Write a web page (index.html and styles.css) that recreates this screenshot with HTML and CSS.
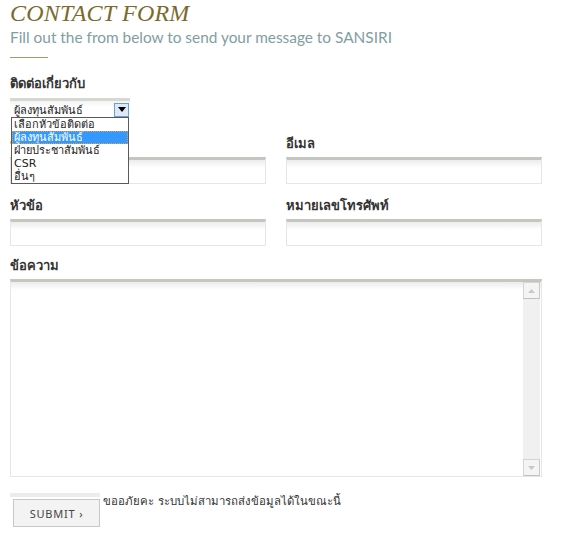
FILE: index.html
```html
<!DOCTYPE html>
<html lang="th">
<head>
<meta charset="utf-8">
<title>Contact Form</title>
<link rel="stylesheet" href="styles.css">
</head>
<body>
<div class="page">
  <h1 class="title">CONTACT FORM</h1>
  <p class="subtitle">Fill out the from below to send your message to SANSIRI</p>
  <div class="rule"></div>

  <div class="topic">
    <label class="label">ติดต่อเกี่ยวกับ</label>
    <div class="select">
      <span class="select-text">ผู้ลงทุนสัมพันธ์</span>
      <span class="select-btn"><svg width="8" height="5" viewBox="0 0 8 5"><path d="M0 0h8L4 5z" fill="#000"/></svg></span>
    </div>
    <ul class="dropdown">
      <li>เลือกหัวข้อติดต่อ</li>
      <li class="active">ผู้ลงทุนสัมพันธ์</li>
      <li>ฝ่ายประชาสัมพันธ์</li>
      <li>CSR</li>
      <li>อื่นๆ</li>
    </ul>
  </div>

  <div class="grid">
    <div class="field">
      <label class="label">ชื่อ</label>
      <input class="input" type="text">
    </div>
    <div class="field">
      <label class="label">อีเมล</label>
      <input class="input" type="text">
    </div>
    <div class="field">
      <label class="label">หัวข้อ</label>
      <input class="input" type="text">
    </div>
    <div class="field">
      <label class="label">หมายเลขโทรศัพท์</label>
      <input class="input" type="text">
    </div>
  </div>

  <div class="field">
    <label class="label">ข้อความ</label>
    <div class="textarea-box">
      <textarea class="textarea"></textarea>
      <div class="scrollbar">
        <span class="sb-btn"><svg width="7" height="4" viewBox="0 0 7 4"><path d="M0 4h7L3.5 0z" fill="#c8c8c8"/></svg></span>
        <span class="sb-track"></span>
        <span class="sb-btn"><svg width="7" height="4" viewBox="0 0 7 4"><path d="M0 0h7L3.5 4z" fill="#c8c8c8"/></svg></span>
      </div>
    </div>
  </div>

  <div class="submit-row">
    <div class="submit-wrap">
      <div class="strip"></div>
      <button class="submit" type="button">SUBMIT &#8250;</button>
    </div>
    <span class="message">ขออภัยคะ ระบบไม่สามารถส่งข้อมูลได้ในขณะนี้</span>
  </div>
</div>
</body>
</html>
```

FILE: styles.css
```css
* { box-sizing: border-box; }
html, body { margin: 0; padding: 0; background: #fff; }
body { font-family: Tahoma, "DejaVu Sans", "Noto Sans", sans-serif; color: #333; }

.page { padding: 0 21px 0 10px; width: 563px; }

.title {
  margin: 0;
  padding-top: 0;
  font-family: "Liberation Serif", serif;
  font-style: italic;
  font-weight: normal;
  font-size: 24px;
  line-height: 26px;
  color: #7a6a2c;
  letter-spacing: 0.2px;
}

.subtitle {
  margin: 0;
  font-family: Lato, "Open Sans", sans-serif;
  font-weight: 400;
  font-size: 15.4px;
  line-height: 22px;
  color: #7f9ea1;
}

.rule { width: 38px; height: 1px; background: #a59a70; margin-top: 9px; }

.label {
  display: block;
  font-weight: bold;
  font-size: 13px;
  line-height: 16px;
  color: #333;
}

.topic { position: relative; margin-top: 18px; }
.topic .label { margin-bottom: 6px; }

.select {
  width: 120px;
  height: 20px;
  border-top: 3px solid #d6d8d2;
  background: linear-gradient(#f3f3f3, #fff 6px);
  display: flex;
  align-items: center;
  justify-content: space-between;
  padding: 0 1px 0 4px;
}
.select-text { font-size: 11px; color: #222; }
.select-btn {
  width: 15px; height: 14px;
  border: 1px solid #6a9fd4;
  background: #dce9f6;
  display: flex; align-items: center; justify-content: center;
}

.dropdown {
  position: absolute;
  left: 1px; top: 41px;
  width: 118px;
  margin: 0; padding: 0;
  list-style: none;
  border: 1px solid #5a5a5a;
  background: #fff;
  z-index: 5;
}
.dropdown li {
  font-size: 11px;
  line-height: 13px;
  height: 13px;
  padding: 0 2px;
  color: #222;
  white-space: nowrap;
  overflow: visible;
}
.dropdown li.active {
  background: #3399ff;
  color: #fff;
  outline: 1px dotted #e8a040;
  outline-offset: -1px;
}

.grid {
  display: grid;
  grid-template-columns: 256px 256px;
  column-gap: 20px;
  row-gap: 14px;
  margin-top: 18px;
}

.field .label { margin-bottom: 5px; }

.input {
  display: block;
  width: 100%;
  height: 27px;
  border: 1px solid #e6e6e6;
  border-top: 3px solid #c3c7c0;
  background: linear-gradient(#ececec, #fff 8px);
  outline: none;
  margin: 0;
}

.grid + .field { margin-top: 12px; }

.textarea-box {
  display: flex;
  width: 532px;
  height: 198px;
  border: 1px solid #e6e6e6;
  border-top: 3px solid #c3c7c0;
  background: linear-gradient(#ececec, #fff 8px);
}
.textarea {
  flex: 1;
  border: none;
  background: transparent;
  resize: none;
  outline: none;
  margin: 0;
}
.scrollbar {
  width: 17px;
  display: flex;
  flex-direction: column;
  background: #f0f0f0;
  margin-right: 1px;
}
.sb-btn {
  height: 17px;
  border: 1px solid #d4d4d4;
  border-right-color: #c8c8c8;
  border-bottom-color: #c0c0c0;
  background: #f4f4f4;
  display: flex; align-items: center; justify-content: center;
}
.sb-track { flex: 1; }

.submit-row {
  display: flex;
  align-items: flex-start;
  margin-top: 16px;
}
.submit-wrap { width: 93px; }
.strip { width: 90px; height: 4px; background: #ececec; }
.submit {
  display: block;
  margin: 2px 0 0 3px;
  width: 87px;
  height: 28px;
  background: #f3f3f3;
  border: 1px solid #c8c8c8;
  font-family: "Noto Sans", "Open Sans", sans-serif;
  font-size: 11px;
  letter-spacing: 0.8px;
  color: #444;
  padding: 0;
}
.message { font-size: 11.4px; line-height: 14px; color: #333; margin-top: 1px; }
```
